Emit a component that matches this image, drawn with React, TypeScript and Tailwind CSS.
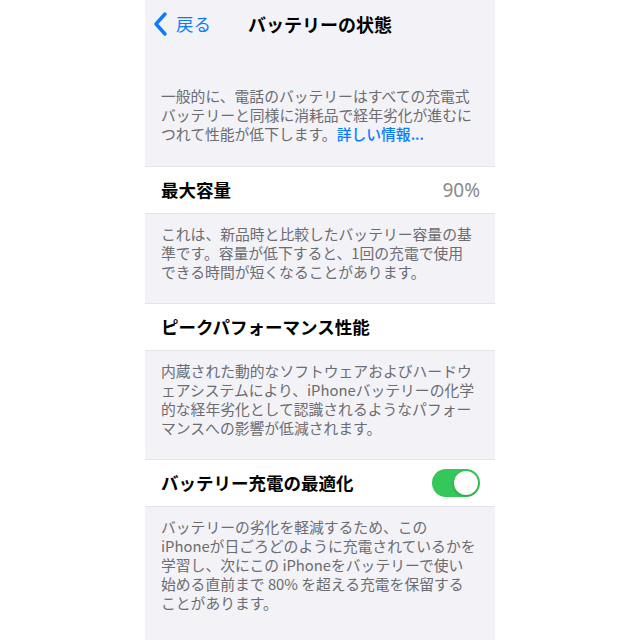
import React from "react";

const font = { fontFamily: '"Noto Sans CJK JP", "Noto Sans", sans-serif' };

function Footer({ children, className = "" }: { children: React.ReactNode; className?: string }) {
  return (
    <div className={`px-4 pt-[10px] pb-[22px] text-[14.8px] leading-[19px] text-[#6c6c71] whitespace-nowrap ${className}`}>
      {children}
    </div>
  );
}

function Cell({ children }: { children: React.ReactNode }) {
  return (
    <div className="h-12 bg-white border-t border-b border-[#e3e3e8] flex items-center justify-between pl-4 pr-[15px]">
      {children}
    </div>
  );
}

export default function App() {
  return (
    <div className="w-[640px] h-[640px] bg-white flex justify-center overflow-hidden" style={font}>
      <div className="w-[350px] h-[640px] bg-[#f2f2f7] flex flex-col">
        <div className="h-12 relative flex items-center justify-center">
          <div className="absolute left-[7px] top-0 h-12 flex items-center gap-[8px] text-[#0a7aff]">
            <svg width="16" height="26" viewBox="0 0 16 26" fill="none">
              <path d="M13 3 L4 13 L13 23" stroke="#0a7aff" strokeWidth="3.4" strokeLinecap="round" strokeLinejoin="round" />
            </svg>
            <span className="text-[17.5px] leading-none">戻る</span>
          </div>
          <span className="text-[18px] font-bold text-black leading-none">バッテリーの状態</span>
        </div>

        <div className="px-4 pt-[38px] pb-[23px] text-[14.8px] leading-[19px] text-[#6c6c71] whitespace-nowrap">
          一般的に、電話のバッテリーはすべての充電式<br />
          バッテリーと同様に消耗品で経年劣化が進むに<br />
          つれて性能が低下します。<span className="text-[#0a7aff] font-medium">詳しい情報...</span>
        </div>

        <Cell>
          <span className="text-[17.5px] font-bold text-black">最大容量</span>
          <span className="text-[19px] text-[#8a8a8e]" style={{ fontFamily: '"Noto Sans", "Noto Sans CJK JP", sans-serif' }}>90%</span>
        </Cell>
        <Footer>
          これは、新品時と比較したバッテリー容量の基<br />
          準です。容量が低下すると、1回の充電で使用<br />
          できる時間が短くなることがあります。
        </Footer>

        <Cell>
          <span className="text-[17.5px] font-bold text-black">ピークパフォーマンス性能</span>
        </Cell>
        <Footer>
          内蔵された動的なソフトウェアおよびハードウ<br />
          ェアシステムにより、iPhoneバッテリーの化学<br />
          的な経年劣化として認識されるようなパフォー<br />
          マンスへの影響が低減されます。
        </Footer>

        <Cell>
          <span className="text-[17.5px] font-bold text-black">バッテリー充電の最適化</span>
          <div className="w-12 h-[28px] rounded-full bg-[#34c759] relative">
            <div className="absolute right-[2px] top-[2px] w-6 h-6 rounded-full bg-white shadow-[0_1px_3px_rgba(0,0,0,0.25)]" />
          </div>
        </Cell>
        <Footer>
          バッテリーの劣化を軽減するため、この<br />
          iPhoneが日ごろどのように充電されているかを<br />
          学習し、次にこの iPhoneをバッテリーで使い<br />
          始める直前まで 80% を超える充電を保留する<br />
          ことがあります。
        </Footer>
      </div>
    </div>
  );
}
